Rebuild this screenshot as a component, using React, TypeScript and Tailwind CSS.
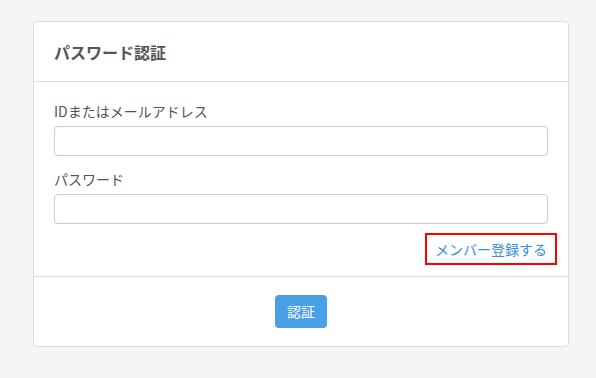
import React from "react";

const font = { fontFamily: '"Noto Sans CJK JP", "Noto Sans", sans-serif' };

const Field = ({ label, type, top }: { label: string; type: string; top: string }) => (
  <div className={top}>
    <label className="block text-[14px] leading-[20px] text-[#555]">{label}</label>
    <input
      type={type}
      className="mt-[5px] block h-[30px] w-full rounded-[4px] border border-[#ccc] bg-white px-3 text-[14px] outline-none"
    />
  </div>
);

const App = () => {
  return (
    <div className="min-h-[378px] w-full bg-[#f5f5f5] pt-[21px]" style={font}>
      <div className="ml-[33px] w-[536px] rounded-[4px] border border-[#dcdcdc] bg-white">
        <div className="flex h-[60px] items-center border-b border-[#dcdcdc] px-[20px]">
          <h1 className="text-[16px] font-bold leading-[20px] text-[#555]">パスワード認証</h1>
        </div>
        <div className="border-b border-[#dcdcdc] px-[20px] pt-[19px] pb-[11px]">
          <Field label="IDまたはメールアドレス" type="text" top="" />
          <Field label="パスワード" type="password" top="mt-[13px]" />
          <div className="mt-[9px] flex justify-end">
            <a
              href="#"
              className="-mr-[9px] border-2 border-[#ff0000] px-[8px] py-[4px] text-[14px] leading-[20px] text-[#3a8fd9]"
            >
              メンバー登録する
            </a>
          </div>
        </div>
        <div className="flex justify-center pt-[18px] pb-[18px]">
          <button className="h-[33px] rounded-[4px] bg-[#4aa0e6] px-[12px] text-[14px] text-white">
            認証
          </button>
        </div>
      </div>
    </div>
  );
};

export default App;
